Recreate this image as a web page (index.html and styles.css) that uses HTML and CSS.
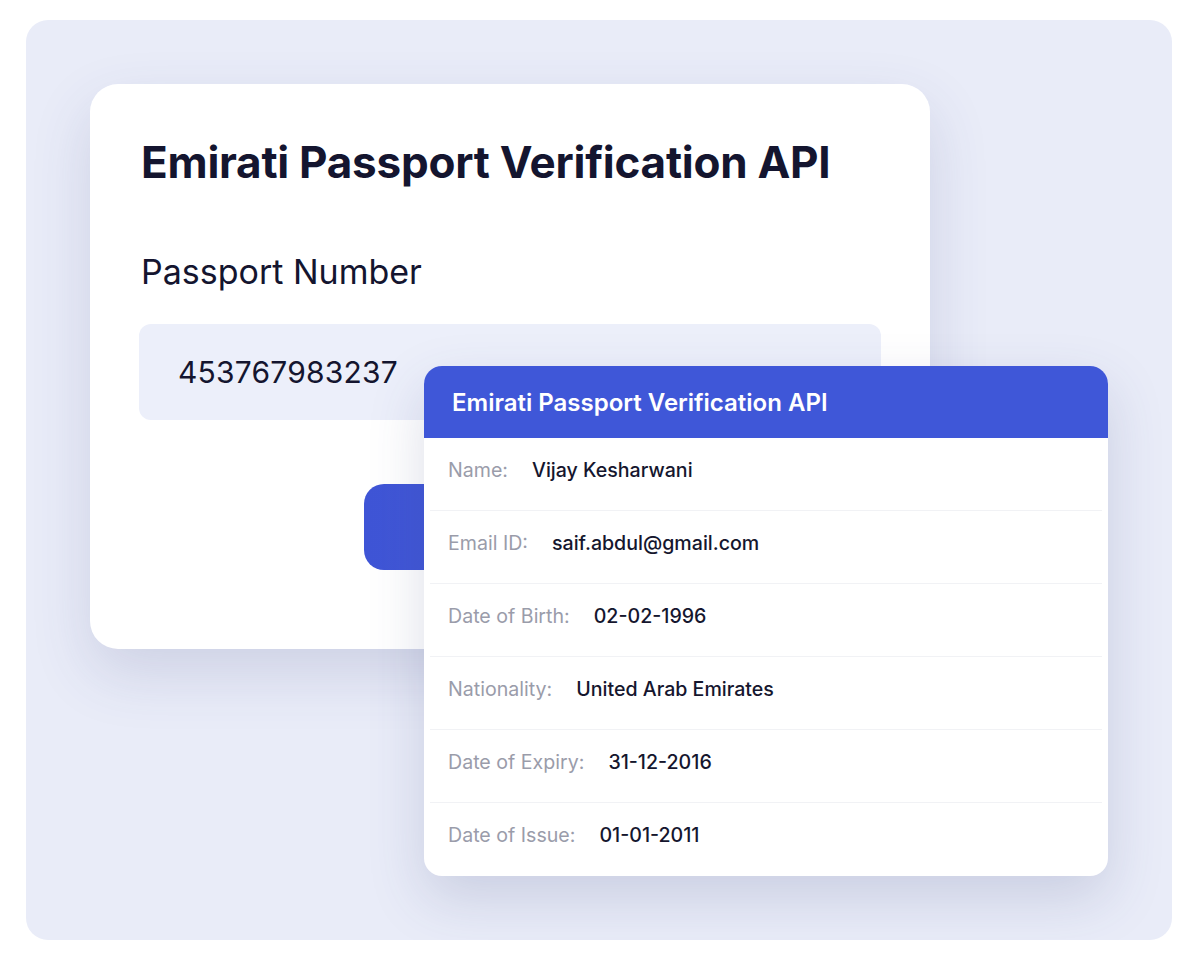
FILE: index.html
```html
<!DOCTYPE html>
<html lang="en">
<head>
  <meta charset="UTF-8" />
  <meta name="viewport" content="width=device-width, initial-scale=1.0" />
  <title>Emirati Passport Verification API</title>
  <link rel="stylesheet" href="styles.css">
</head>
<body>
  <div class="panel">
    <div class="form-card">
      <h1>Emirati Passport Verification API</h1>
      <label class="field-label">Passport Number</label>
      <div class="field-input">453767983237</div>
      <div class="submit-row">
        <div class="submit-btn"></div>
      </div>
    </div>

    <div class="result-card">
      <div class="result-head">Emirati Passport Verification API</div>
      <div class="result-body">
        <div class="row"><span class="key">Name:</span><span class="val">Vijay Kesharwani</span></div>
        <div class="row"><span class="key">Email ID:</span><span class="val">saif.abdul@gmail.com</span></div>
        <div class="row"><span class="key">Date of Birth:</span><span class="val">02-02-1996</span></div>
        <div class="row"><span class="key">Nationality:</span><span class="val">United Arab Emirates</span></div>
        <div class="row"><span class="key">Date of Expiry:</span><span class="val">31-12-2016</span></div>
        <div class="row"><span class="key">Date of Issue:</span><span class="val">01-01-2011</span></div>
      </div>
    </div>
  </div>
</body>
</html>
```

FILE: styles.css
```css
body {
  margin: 0;
  background: #ffffff;
  font-family: Inter, "Noto Sans", sans-serif;
  color: #15162e;
}
.panel {
  position: relative;
  margin: 20px 0 0 26px;
  width: 1146px;
  height: 920px;
  background: #e9ecf8;
  border-radius: 22px;
  padding: 64px 0 0 64px;
  box-sizing: border-box;
}
.form-card {
  width: 840px;
  height: 565px;
  box-sizing: border-box;
  background: #ffffff;
  border-radius: 28px;
  padding: 50px 49px 0 51px;
  box-shadow: 0 24px 60px rgba(60, 70, 130, 0.16);
}
.form-card h1 {
  margin: 0;
  font-size: 44px;
  line-height: 56px;
  font-weight: 700;
  color: #14152f;
  letter-spacing: -0.25px;
}
.field-label {
  display: block;
  margin-top: 62px;
  font-size: 34px;
  line-height: 40px;
  font-weight: 400;
  color: #14152f;
}
.field-input {
  margin: 32px 0 0 -2px;
  height: 96px;
  box-sizing: border-box;
  padding-left: 39px;
  display: flex;
  align-items: center;
  background: #eceffa;
  border-radius: 12px;
  font-size: 30px;
  color: #14152f;
  letter-spacing: 0.2px;
}
.submit-row {
  display: flex;
  justify-content: flex-end;
  margin-top: 64px;
}
.submit-btn {
  width: 517px;
  height: 86px;
  border-radius: 20px;
  background: linear-gradient(90deg, #3f55d6, #4a63e0);
}
.result-card {
  position: absolute;
  left: 398px;
  top: 346px;
  width: 684px;
  background: #ffffff;
  border-radius: 18px;
  overflow: hidden;
  box-shadow: 0 22px 56px rgba(60, 70, 130, 0.18);
}
.result-head {
  height: 72px;
  display: flex;
  align-items: center;
  padding-left: 28px;
  background: #3f57d8;
  color: #ffffff;
  font-size: 24px;
  font-weight: 600;
}
.row {
  height: 73px;
  display: flex;
  align-items: center;
  gap: 24px;
  margin: 0 6px;
  padding: 0 18px 9px;
  border-bottom: 1px solid #f1f2f5;
  font-size: 19.6px;
  box-sizing: border-box;
}
.row:last-child {
  border-bottom: none;
}
.key {
  color: #9a9caa;
}
.val {
  color: #15162e;
  font-weight: 500;
}
```
